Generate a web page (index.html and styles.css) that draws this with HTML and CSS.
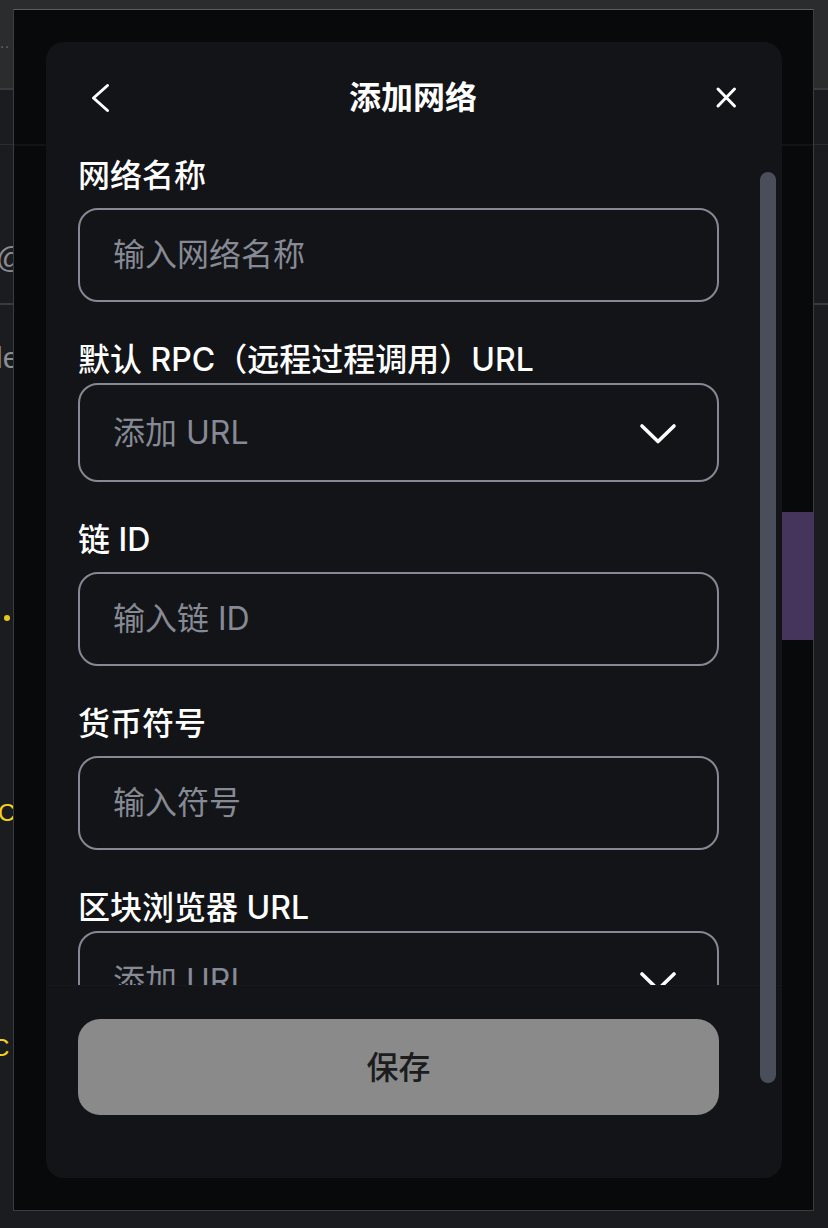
FILE: index.html
```html
<!DOCTYPE html>
<html lang="zh-CN">
<head>
<meta charset="utf-8">
<title>添加网络</title>
<link rel="stylesheet" href="styles.css">
</head>
<body>
<div class="page">
  <div class="page-top"><span class="dots">··</span></div>
  <div class="page-row r1"></div>
  <div class="page-row r2"><span class="bg-text gray">@</span></div>
  <div class="page-row r3"><span class="bg-text gray">le</span></div>
  <div class="page-row r4"><span class="bg-dot"></span></div>
  <div class="page-row r5"><span class="bg-text yellow">C</span></div>
  <div class="page-row r6"><span class="bg-text yellow cut">C</span></div>
</div>

<div class="frame">
  <div class="dim-line"></div>
  <div class="dim-image"></div>
  <div class="modal">
    <div class="modal-header">
      <button class="icon-btn" aria-label="返回">
        <svg width="44" height="44" viewBox="0 0 44 44"><polyline points="29.5,9.5 15.5,22 29.5,34.5" fill="none" stroke="#fff" stroke-width="3" stroke-linecap="round" stroke-linejoin="round"/></svg>
      </button>
      <h1 class="title">添加网络</h1>
      <button class="icon-btn" aria-label="关闭">
        <svg width="44" height="44" viewBox="0 0 44 44"><path d="M14 13 L30.5 30 M30.5 13 L14 30" fill="none" stroke="#fff" stroke-width="3" stroke-linecap="round"/></svg>
      </button>
    </div>

    <div class="modal-body">
      <div class="field">
        <div class="label">网络名称</div>
        <div class="input"><span class="placeholder">输入网络名称</span></div>
      </div>
      <div class="field select-field">
        <div class="label">默认 RPC（远程过程调用）URL</div>
        <div class="input select"><span class="placeholder">添加 URL</span>
          <svg class="chev" width="38" height="24" viewBox="0 0 38 24"><polyline points="3,4 19,19.5 35,4" fill="none" stroke="#fff" stroke-width="3.6" stroke-linecap="round" stroke-linejoin="round"/></svg>
        </div>
      </div>
      <div class="field">
        <div class="label">链 ID</div>
        <div class="input"><span class="placeholder">输入链 ID</span></div>
      </div>
      <div class="field">
        <div class="label">货币符号</div>
        <div class="input"><span class="placeholder">输入符号</span></div>
      </div>
      <div class="field select-field">
        <div class="label">区块浏览器 URL</div>
        <div class="input select"><span class="placeholder">添加 URL</span>
          <svg class="chev" width="38" height="24" viewBox="0 0 38 24"><polyline points="3,4 19,19.5 35,4" fill="none" stroke="#fff" stroke-width="3.6" stroke-linecap="round" stroke-linejoin="round"/></svg>
        </div>
      </div>
    </div>

    <div class="modal-footer">
      <button class="save-btn">保存</button>
    </div>

    <div class="scrollbar"></div>
  </div>
</div>
</body>
</html>
```

FILE: styles.css
```css
* { box-sizing: border-box; }

html, body {
  margin: 0;
  padding: 0;
}

body {
  width: 828px;
  height: 1228px;
  overflow: hidden;
  position: relative;
  background: #1b1c20;
  font-family: Inter, "Noto Sans CJK SC", sans-serif;
  color: #fff;
}

/* background page (under the popup) */
.page {
  display: flex;
  flex-direction: column;
}

.page-top {
  height: 90px;
  background: #2b2c2e;
  border-bottom: 2px solid #3a3b3e;
  position: relative;
}

.dots {
  display: block;
  padding-top: 40px;
  font-size: 14px;
  line-height: 14px;
  color: #6a6b6e;
  letter-spacing: 1px;
}

.page-row {
  display: flex;
  align-items: flex-start;
}

.r1 { height: 55px; border-bottom: 1px solid #2b2c31; }
.r2 { height: 160px; padding-top: 96px; border-bottom: 2px solid #3a3b40; }
.r3 { height: 120px; padding-top: 36px; }
.r4 { height: 260px; padding-top: 190px; }
.r5 { height: 240px; padding-top: 111px; }
.r6 { height: 200px; padding-top: 106px; }

.bg-text {
  font-family: "Liberation Sans", sans-serif;
  font-size: 30px;
  line-height: 34px;
}

.gray { color: #8b8d92; margin-left: -4px; }
.yellow { color: #f3d21b; font-size: 24px; margin-left: -2px; }
.yellow.cut { margin-left: -8px; }

.bg-dot {
  display: block;
  width: 6px;
  height: 6px;
  border-radius: 50%;
  background: #e8c91a;
  margin-left: 4px;
}

/* popup frame with dim overlay */
.frame {
  position: absolute;
  left: 13px;
  top: 9px;
  width: 801px;
  height: 1202px;
  background: #07090a;
  border: 1px solid #3b3c3f;
  border-top-color: #5c5d60;
  padding: 32px 0 0 32px;
}

.dim-line {
  position: absolute;
  left: 0;
  right: 0;
  top: 134px;
  height: 2px;
  background: #111315;
}

.dim-image {
  position: absolute;
  left: 768px;
  top: 502px;
  width: 32px;
  height: 128px;
  background: #45355d;
}

.modal {
  position: relative;
  width: 736px;
  height: 1136px;
  background: #131417;
  border-radius: 18px;
  display: flex;
  flex-direction: column;
  overflow: hidden;
}

.modal-header {
  height: 112px;
  flex: none;
  display: flex;
  align-items: center;
  padding: 0 34px 0 32px;
}

.icon-btn {
  width: 44px;
  height: 44px;
  padding: 0;
  border: 0;
  background: none;
  display: flex;
  align-items: center;
  justify-content: center;
}

.title {
  flex: 1;
  margin: 0;
  text-align: center;
  font-size: 32px;
  line-height: 44px;
  font-weight: 600;
  color: #fff;
}

.modal-body {
  flex: 1;
  min-height: 0;
  overflow: hidden;
  padding: 0 63px 0 32px;
  display: flex;
  flex-direction: column;
  gap: 36px;
}

.field {
  flex: none;
  display: flex;
  flex-direction: column;
  gap: 14px;
}

.select-field { gap: 5px; }

.label {
  height: 40px;
  padding-top: 2px;
  font-size: 32px;
  line-height: 40px;
  font-weight: 500;
  color: #fff;
  white-space: nowrap;
}

.input {
  height: 94px;
  border: 2px solid #858994;
  border-radius: 20px;
  display: flex;
  align-items: center;
  padding: 0 40px 0 33px;
}

.input.select {
  height: 99px;
  justify-content: space-between;
}

.placeholder {
  font-size: 32px;
  line-height: 40px;
  color: #868a95;
}

.chev { flex: none; margin-top: 2px; }

.modal-footer {
  flex: none;
  height: 193px;
  padding: 33px 63px 0 32px;
  border-top: 1px solid #17181b;
}

.save-btn {
  width: 641px;
  height: 96px;
  border: 0;
  border-radius: 22px;
  background: #898a89;
  color: #1b1c1e;
  font-family: Inter, "Noto Sans CJK SC", sans-serif;
  font-size: 32px;
  font-weight: 500;
  padding: 0 0 4px;
}

.scrollbar {
  position: absolute;
  left: 714px;
  top: 130px;
  width: 16px;
  height: 911px;
  border-radius: 8px;
  background: #4a4e5a;
}
```
